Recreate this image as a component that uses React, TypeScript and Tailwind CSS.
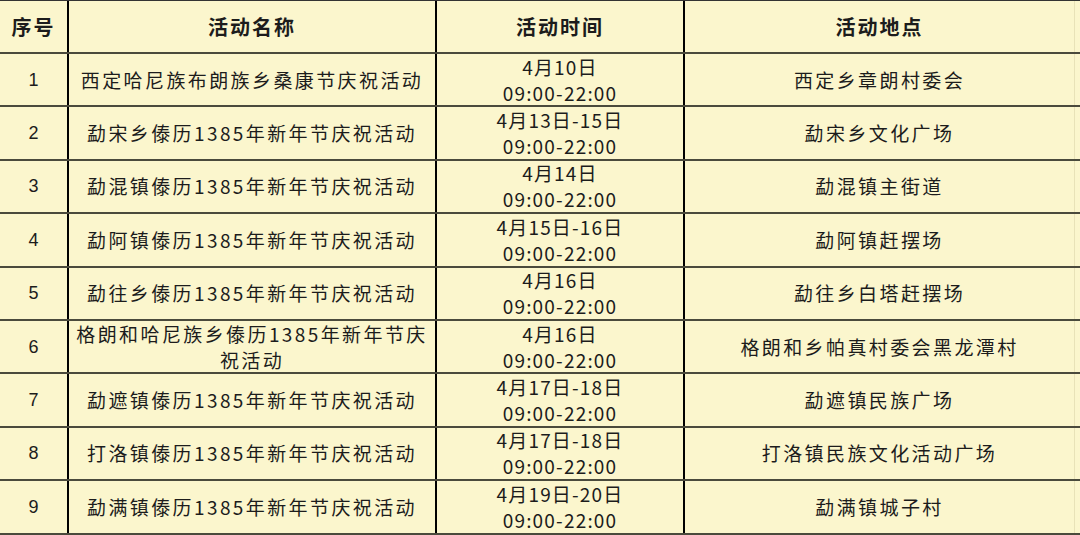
import React from "react";

const rows: [string, string[], string, string][] = [
  ["1", ["西定哈尼族布朗族乡桑康节庆祝活动"], "4月10日", "西定乡章朗村委会"],
  ["2", ["勐宋乡傣历1385年新年节庆祝活动"], "4月13日-15日", "勐宋乡文化广场"],
  ["3", ["勐混镇傣历1385年新年节庆祝活动"], "4月14日", "勐混镇主街道"],
  ["4", ["勐阿镇傣历1385年新年节庆祝活动"], "4月15日-16日", "勐阿镇赶摆场"],
  ["5", ["勐往乡傣历1385年新年节庆祝活动"], "4月16日", "勐往乡白塔赶摆场"],
  ["6", ["格朗和哈尼族乡傣历1385年新年节庆", "祝活动"], "4月16日", "格朗和乡帕真村委会黑龙潭村"],
  ["7", ["勐遮镇傣历1385年新年节庆祝活动"], "4月17日-18日", "勐遮镇民族广场"],
  ["8", ["打洛镇傣历1385年新年节庆祝活动"], "4月17日-18日", "打洛镇民族文化活动广场"],
  ["9", ["勐满镇傣历1385年新年节庆祝活动"], "4月19日-20日", "勐满镇城子村"],
];

const font = {
  fontFamily: '"Noto Sans CJK SC", "Noto Sans", sans-serif',
};

export default function App() {
  return (
    <div
      className="w-[1080px] h-[535px] bg-[#fbf6cd] text-[#1c1c1c] overflow-hidden border-t border-[#333]"
      style={font}
    >
      <div className="flex h-[53px] border-b-2 border-[#4a4a3c] font-bold text-[20px] tracking-[2px]">
        <div className="w-[69px] border-r-2 border-black flex items-center justify-center">序号</div>
        <div className="w-[368px] border-r-2 border-black flex items-center justify-center">活动名称</div>
        <div className="w-[248px] border-r-2 border-black flex items-center justify-center">活动时间</div>
        <div className="w-[390px] border-r border-[#e8e2b8] flex items-center justify-center">活动地点</div>
      </div>
      {rows.map(([n, name, date, place]) => (
        <div key={n} className="flex h-[53.4px] border-b-2 border-[#4a4a3c] text-[19px] tracking-[2.4px] leading-[26px]">
          <div className="w-[69px] border-r-2 border-black flex items-center justify-center tracking-normal text-[18px]" style={{ fontFamily: '"Liberation Sans", sans-serif' }}>{n}</div>
          <div className="w-[368px] border-r-2 border-black flex flex-col items-center justify-center">
            {name.map((l) => (
              <div key={l}>{l}</div>
            ))}
          </div>
          <div className="w-[248px] border-r-2 border-black flex flex-col items-center justify-center tracking-[1.2px]">
            <div>{date}</div>
            <div>09:00-22:00</div>
          </div>
          <div className="w-[390px] border-r border-[#e8e2b8] flex items-center justify-center">{place}</div>
        </div>
      ))}
    </div>
  );
}
